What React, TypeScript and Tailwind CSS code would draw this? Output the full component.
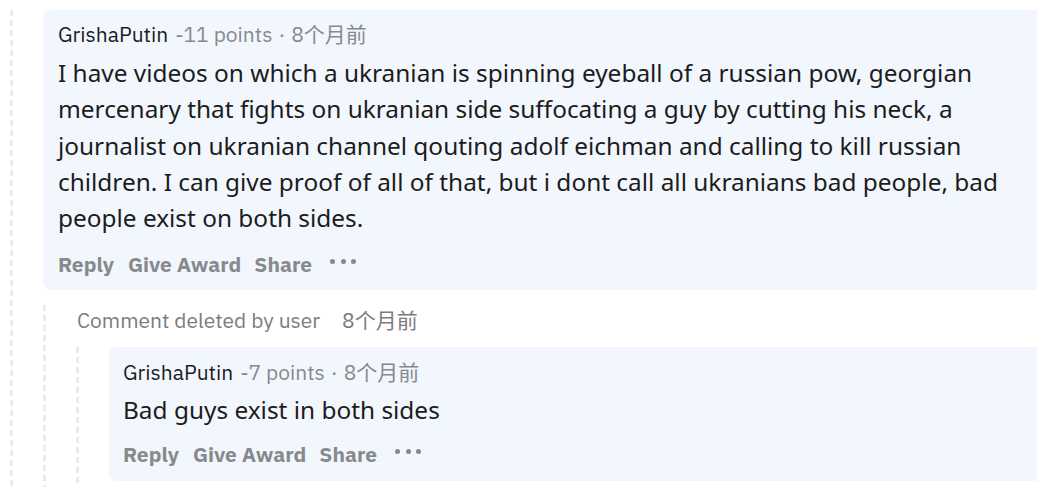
import React from "react";

const meta = "font-['IBM_Plex_Sans','Roboto','Liberation_Sans','Noto_Sans_CJK_SC',sans-serif]";
const body = "font-['Noto_Sans','Open_Sans',sans-serif]";

function ThreadLine({ className = "" }: { className?: string }) {
  return (
    <div
      className={`w-[3px] shrink-0 bg-[linear-gradient(#ebebeb_60%,transparent_60%)] bg-[length:3px_10px] ${className}`}
    />
  );
}

function Actions() {
  return (
    <div className={`${meta} flex h-[36px] items-center text-[21px] font-bold text-[#878a8c]`}>
      <span>Reply</span>
      <span className="ml-[14px]">Give Award</span>
      <span className="ml-[13px]">Share</span>
      <span className="mb-[6px] ml-[18px] flex gap-[5.5px]">
        <i className="block h-[5px] w-[5px] rounded-full bg-[#878a8c]" />
        <i className="block h-[5px] w-[5px] rounded-full bg-[#878a8c]" />
        <i className="block h-[5px] w-[5px] rounded-full bg-[#878a8c]" />
      </span>
    </div>
  );
}

function Header({ points }: { points: string }) {
  return (
    <div className={`${meta} flex h-[30px] items-center text-[21px] text-[#878a8c]`}>
      <span className="text-[#1c1c1c]">GrishaPutin</span>
      <span className="ml-[7px]">{points}</span>
      <span className="mx-[6px]">·</span>
      <span>8个月前</span>
    </div>
  );
}

export default function App() {
  return (
    <div className="h-[487px] w-[1037px] overflow-hidden bg-white">
      <div className="flex w-[1080px] pl-[10px] pt-[10px]">
        <ThreadLine className="h-[477px]" />
        <div className="ml-[30px] flex-1">
          <div className="rounded-[8px] bg-[#f2f7fe] px-[15px] pb-[8px] pt-[10px]">
            <Header points="-11 points" />
            <p className={`${body} mt-[5px] text-[24.4px] leading-[36.25px] text-[#1c1c1c]`}>
              I have videos on which a ukranian is spinning eyeball of a russian pow, georgian
              <br />
              mercenary that fights on ukranian side suffocating a guy by cutting his neck, a
              <br />
              journalist on ukranian channel qouting adolf eichman and calling to kill russian
              <br />
              children. I can give proof of all of that, but i dont call all ukranians bad people, bad
              <br />
              people exist on both sides.
            </p>
            <div className="mt-[10px]">
              <Actions />
            </div>
          </div>

          <div className="mt-[15px] flex items-start">
            <ThreadLine className="h-[200px]" />
            <div className="ml-[30px] flex-1">
              <div className={`${meta} flex h-[30px] items-center text-[21px] text-[#7c7c7c]`}>
                <span className="ml-[1px]">Comment deleted by user</span>
                <span className="ml-[22px]">8个月前</span>
              </div>
              <div className="mt-[12px] flex items-start">
                <ThreadLine className="h-[160px]" />
                <div className="ml-[30px] flex-1 rounded-[8px] bg-[#f2f7fe] px-[14px] pb-[8px] pt-[10px]">
                  <Header points="-7 points" />
                  <p className={`${body} mt-[5px] text-[24.4px] leading-[36.25px] text-[#1c1c1c]`}>
                    Bad guys exist in both sides
                  </p>
                  <div className="mt-[8px]">
                    <Actions />
                  </div>
                </div>
              </div>
            </div>
          </div>
        </div>
      </div>
    </div>
  );
}
